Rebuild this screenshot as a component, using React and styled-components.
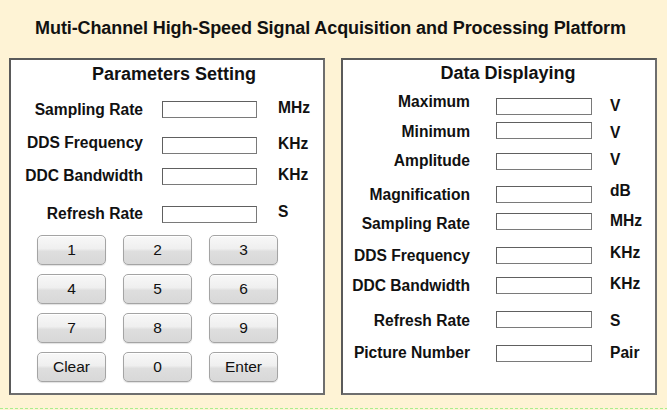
import React from "react";
import styled, { createGlobalStyle } from "styled-components";

const Global = createGlobalStyle`
  html, body { margin: 0; padding: 0; background: #fef3d5; }
  * { box-sizing: border-box; }
`;

const Page = styled.div`
  width: 667px;
  height: 410px;
  background: #fef3d5;
  font-family: "Liberation Sans", Arial, sans-serif;
  color: #111;
  display: flex;
  flex-direction: column;
  overflow: hidden;
`;

const Header = styled.h1`
  margin: 0;
  height: 58px;
  display: flex;
  align-items: center;
  justify-content: center;
  font-size: 18px;
  font-weight: bold;
  letter-spacing: -0.1px;
  padding: 0 6px 2px 0;
`;

const Panels = styled.div`
  display: flex;
  gap: 16px;
  padding: 0 10px 0 9px;
  height: 337px;
`;

const Panel = styled.section`
  flex: 1;
  background: #fff;
  border: 2px solid #6e6e6e;
  border-top-color: #5a5a5a;
  border-left-color: #5a5a5a;
  display: flex;
  flex-direction: column;
`;

const PanelTitle = styled.h2`
  margin: 0;
  height: ${p => p.$h}px;
  display: flex;
  align-items: center;
  justify-content: center;
  padding-left: ${p => p.$indent}px;
  font-size: 18px;
  font-weight: bold;
`;

const Row = styled.div`
  display: grid;
  grid-template-columns: ${p => p.$cols};
  align-items: center;
  height: 18px;
  margin-top: ${p => p.$gap}px;
`;

const Label = styled.span`
  justify-self: end;
  font-size: 15.6px;
  font-weight: bold;
  white-space: nowrap;
  line-height: 18px;
  ${p => (p.$shift > 0 ? `margin-top:${p.$shift * 2}px;` : `margin-bottom:${-p.$shift * 2}px;`)}
`;

const Unit = styled.span`
  font-size: 15.6px;
  font-weight: bold;
  white-space: nowrap;
  line-height: 18px;
  ${p => (p.$shift > 0 ? `margin-top:${p.$shift * 2}px;` : `margin-bottom:${-p.$shift * 2}px;`)}
`;

const Field = styled.div`
  height: 17px;
  background: #fff;
  border: 1px solid #7a7a7a;
  border-top-color: #606060;
  border-left-color: #606060;
`;

const Keypad = styled.div`
  display: grid;
  grid-template-columns: repeat(3, 69px);
  grid-auto-rows: 30px;
  column-gap: 17px;
  row-gap: 9px;
  margin: 14px 0 0 26px;
`;

const Key = styled.button`
  font-family: "Liberation Sans", Arial, sans-serif;
  font-size: 15.5px;
  color: #111;
  padding: 0;
  border: 1px solid #a4a4a4;
  border-radius: 5px;
  background: linear-gradient(#f8f8f8 0%, #efefef 45%, #dedede 55%, #d8d8d8 100%);
  box-shadow: inset 0 1px 0 #fff, 0 1px 1px rgba(0,0,0,0.12);
  cursor: pointer;
`;

const Divider = styled.div`
  margin-top: 13px;
  height: 1px;
  background: repeating-linear-gradient(90deg, #a9ee8e 0 3px, transparent 3px 5px);
`;

const leftRows = [
  { label: "Sampling Rate", unit: "MHz", gap: 11, ls: 0, us: -1.5 },
  { label: "DDS Frequency", unit: "KHz", gap: 17, ls: -2.5, us: -1.5 },
  { label: "DDC Bandwidth", unit: "KHz", gap: 14, ls: 0, us: -1 },
  { label: "Refresh Rate", unit: "S", gap: 19, ls: 0, us: -2 },
];

const rightRows = [
  { label: "Maximum", unit: "V", gap: 7, ls: -4, us: 0 },
  { label: "Minimum", unit: "V", gap: 8, ls: 1.5, us: 2.5 },
  { label: "Amplitude", unit: "V", gap: 14, ls: 0, us: -1 },
  { label: "Magnification", unit: "dB", gap: 13, ls: 1, us: -3 },
  { label: "Sampling Rate", unit: "MHz", gap: 9, ls: 3, us: 0 },
  { label: "DDS Frequency", unit: "KHz", gap: 17, ls: 0, us: -2.5 },
  { label: "DDC Bandwidth", unit: "KHz", gap: 13, ls: 0, us: -1.5 },
  { label: "Refresh Rate", unit: "S", gap: 16, ls: 1.5, us: 1.5 },
  { label: "Picture Number", unit: "Pair", gap: 17, ls: 0, us: 0 },
];

const keys = ["1", "2", "3", "4", "5", "6", "7", "8", "9", "Clear", "0", "Enter"];

const LEFT_COLS = "132px 19px 95px 21px auto";
const RIGHT_COLS = "127px 26px 96px 18px auto";

function FieldRow({ r, cols }) {
  return (
    <Row $cols={cols} $gap={r.gap}>
      <Label $shift={r.ls}>{r.label}</Label>
      <span />
      <Field />
      <span />
      <Unit $shift={r.us}>{r.unit}</Unit>
    </Row>
  );
}

export default function App() {
  return (
    <Page>
      <Global />
      <Header>Muti-Channel High-Speed Signal Acquisition and Processing Platform</Header>
      <Panels>
        <Panel>
          <PanelTitle $h={28} $indent={14}>Parameters Setting</PanelTitle>
          {leftRows.map(r => (
            <FieldRow key={r.label} r={r} cols={LEFT_COLS} />
          ))}
          <Keypad>
            {keys.map(k => (
              <Key key={k}>{k}</Key>
            ))}
          </Keypad>
        </Panel>
        <Panel>
          <PanelTitle $h={26} $indent={18}>Data Displaying</PanelTitle>
          {rightRows.map(r => (
            <FieldRow key={r.label} r={r} cols={RIGHT_COLS} />
          ))}
        </Panel>
      </Panels>
      <Divider />
    </Page>
  );
}
